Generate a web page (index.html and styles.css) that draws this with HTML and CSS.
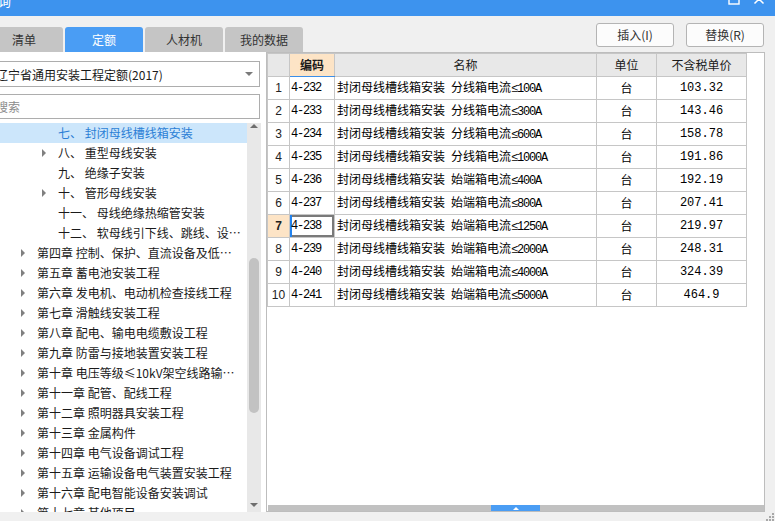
FILE: index.html
```html
<!DOCTYPE html>
<html lang="zh">
<head>
<meta charset="utf-8">
<title>查询</title>
<link rel="stylesheet" href="styles.css">
</head>
<body>
<div class="window">
  <div class="titlebar">
    <span class="title">查询</span>
    <div class="winctl">
      <svg class="ctl" width="12" height="12" viewBox="0 0 12 12"><rect x="1" y="1" width="10" height="10" fill="none" stroke="#fff" stroke-width="1.4"/></svg>
      <svg class="ctl" width="12" height="12" viewBox="0 0 12 12"><path d="M1.5 1.5L10.5 10.5M10.5 1.5L1.5 10.5" stroke="#fff" stroke-width="1.5"/></svg>
    </div>
  </div>

  <div class="toolbar">
    <div class="tabs">
      <div class="tab">清单</div>
      <div class="tab active">定额</div>
      <div class="tab">人材机</div>
      <div class="tab">我的数据</div>
    </div>
    <div class="actions">
      <button class="btn">插入(I)</button>
      <button class="btn">替换(R)</button>
    </div>
  </div>

  <div class="main">
    <div class="left">
      <div class="select"><span>辽宁省通用安装工程定额(2017)</span><span class="caret"></span></div>
      <div class="search">搜索</div>
      <div class="tree">
        <ul class="tree-list">
          <li class="node l3 selected"><span class="arrow"></span><span class="label">七、 封闭母线槽线箱安装</span></li>
          <li class="node l3"><span class="arrow has"></span><span class="label">八、 重型母线安装</span></li>
          <li class="node l3"><span class="arrow"></span><span class="label">九、 绝缘子安装</span></li>
          <li class="node l3"><span class="arrow has"></span><span class="label">十、 管形母线安装</span></li>
          <li class="node l3"><span class="arrow"></span><span class="label">十一、 母线绝缘热缩管安装</span></li>
          <li class="node l3"><span class="arrow"></span><span class="label">十二、 软母线引下线、跳线、设备连线</span></li>
          <li class="node l2"><span class="arrow has"></span><span class="label">第四章 控制、保护、直流设备及低压电器安装工程</span></li>
          <li class="node l2"><span class="arrow has"></span><span class="label">第五章 蓄电池安装工程</span></li>
          <li class="node l2"><span class="arrow has"></span><span class="label">第六章 发电机、电动机检查接线工程</span></li>
          <li class="node l2"><span class="arrow has"></span><span class="label">第七章 滑触线安装工程</span></li>
          <li class="node l2"><span class="arrow has"></span><span class="label">第八章 配电、输电电缆敷设工程</span></li>
          <li class="node l2"><span class="arrow has"></span><span class="label">第九章 防雷与接地装置安装工程</span></li>
          <li class="node l2"><span class="arrow has"></span><span class="label">第十章 电压等级≤10kV架空线路输电工程</span></li>
          <li class="node l2"><span class="arrow has"></span><span class="label">第十一章 配管、配线工程</span></li>
          <li class="node l2"><span class="arrow has"></span><span class="label">第十二章 照明器具安装工程</span></li>
          <li class="node l2"><span class="arrow has"></span><span class="label">第十三章 金属构件</span></li>
          <li class="node l2"><span class="arrow has"></span><span class="label">第十四章 电气设备调试工程</span></li>
          <li class="node l2"><span class="arrow has"></span><span class="label">第十五章 运输设备电气装置安装工程</span></li>
          <li class="node l2"><span class="arrow has"></span><span class="label">第十六章 配电智能设备安装调试</span></li>
          <li class="node l2"><span class="arrow has"></span><span class="label">第十七章 其他项目</span></li>
        </ul>
        <div class="vscroll">
          <div class="sb-btn sb-up"></div>
          <div class="sb-track"><div class="sb-thumb"></div></div>
          <div class="sb-btn sb-down"></div>
        </div>
      </div>
    </div>

    <div class="grid">
      <table class="table">
        <colgroup>
          <col class="c-no"><col class="c-code"><col class="c-name"><col class="c-unit"><col class="c-price">
        </colgroup>
        <thead>
          <tr>
            <th class="corner"></th>
            <th class="sorted">编码</th>
            <th>名称</th>
            <th>单位</th>
            <th>不含税单价</th>
          </tr>
        </thead>
        <tbody>
          <tr><td class="no">1</td><td class="code lat">4-232</td><td class="name">封闭母线槽线箱安装<span class="lat"> </span>分线箱电流<span class="lat">≤100A</span></td><td class="unit">台</td><td class="price">103.32</td></tr>
          <tr><td class="no">2</td><td class="code lat">4-233</td><td class="name">封闭母线槽线箱安装<span class="lat"> </span>分线箱电流<span class="lat">≤300A</span></td><td class="unit">台</td><td class="price">143.46</td></tr>
          <tr><td class="no">3</td><td class="code lat">4-234</td><td class="name">封闭母线槽线箱安装<span class="lat"> </span>分线箱电流<span class="lat">≤600A</span></td><td class="unit">台</td><td class="price">158.78</td></tr>
          <tr><td class="no">4</td><td class="code lat">4-235</td><td class="name">封闭母线槽线箱安装<span class="lat"> </span>分线箱电流<span class="lat">≤1000A</span></td><td class="unit">台</td><td class="price">191.86</td></tr>
          <tr><td class="no">5</td><td class="code lat">4-236</td><td class="name">封闭母线槽线箱安装<span class="lat"> </span>始端箱电流<span class="lat">≤400A</span></td><td class="unit">台</td><td class="price">192.19</td></tr>
          <tr><td class="no">6</td><td class="code lat">4-237</td><td class="name">封闭母线槽线箱安装<span class="lat"> </span>始端箱电流<span class="lat">≤800A</span></td><td class="unit">台</td><td class="price">207.41</td></tr>
          <tr class="current"><td class="no">7</td><td class="code lat focus">4-238</td><td class="name">封闭母线槽线箱安装<span class="lat"> </span>始端箱电流<span class="lat">≤1250A</span></td><td class="unit">台</td><td class="price">219.97</td></tr>
          <tr><td class="no">8</td><td class="code lat">4-239</td><td class="name">封闭母线槽线箱安装<span class="lat"> </span>始端箱电流<span class="lat">≤2000A</span></td><td class="unit">台</td><td class="price">248.31</td></tr>
          <tr><td class="no">9</td><td class="code lat">4-240</td><td class="name">封闭母线槽线箱安装<span class="lat"> </span>始端箱电流<span class="lat">≤4000A</span></td><td class="unit">台</td><td class="price">324.39</td></tr>
          <tr><td class="no">10</td><td class="code lat">4-241</td><td class="name">封闭母线槽线箱安装<span class="lat"> </span>始端箱电流<span class="lat">≤5000A</span></td><td class="unit">台</td><td class="price">464.9</td></tr>
        </tbody>
      </table>
      <div class="spacer"></div>
      <div class="hscroll"><div class="hthumb"></div></div>
    </div>
  </div>

  <div class="statusbar">
    <svg class="grip" width="11" height="9" viewBox="0 0 11 9">
      <rect x="8" y="1" width="2" height="2" fill="#a8a8a8"/>
      <rect x="5" y="4" width="2" height="2" fill="#a8a8a8"/>
      <rect x="8" y="4" width="2" height="2" fill="#a8a8a8"/>
      <rect x="2" y="7" width="2" height="2" fill="#a8a8a8"/>
      <rect x="5" y="7" width="2" height="2" fill="#a8a8a8"/>
      <rect x="8" y="7" width="2" height="2" fill="#a8a8a8"/>
    </svg>
  </div>
</div>
</body>
</html>
```

FILE: styles.css
```css
* { box-sizing: border-box; }
html, body { margin: 0; padding: 0; }
body {
  width: 775px;
  height: 521px;
  overflow: hidden;
  background: #f0f0f0;
  font-family: "Noto Sans CJK SC", "Noto Sans", sans-serif;
  font-size: 12px;
  color: #1a1a1a;
}

.window {
  width: 790px;
  margin-left: -15px;
  margin-top: -14px;
  display: flex;
  flex-direction: column;
}

/* title bar */
.titlebar {
  height: 30px;
  background: #3d93ee;
  color: #fff;
  display: flex;
}
.title { flex: 1; font-size: 13px; line-height: 30px; }
.winctl { display: flex; gap: 13px; margin: 7px 10px 0 0; }
.ctl { display: block; }

/* toolbar with tabs and buttons */
.toolbar {
  height: 36px;
  display: flex;
  justify-content: space-between;
}
.tabs { display: flex; gap: 2px; align-self: flex-end; }
.tab {
  width: 78px;
  height: 25px;
  line-height: 25px;
  text-align: center;
  background: #c5c5c5;
  color: #333;
  border-radius: 3px 3px 0 0;
}
.tab.active { background: #4a9df4; color: #fff; }
.actions { display: flex; gap: 12px; margin: 7px 11px 0 0; }
.btn {
  width: 78px;
  height: 24px;
  padding: 0;
  border: 1px solid #b4b4b4;
  border-radius: 3px;
  background: #fcfcfc;
  color: #333;
  font: inherit;
  line-height: 22px;
}

/* main area */
.main { height: 460px; display: flex; }

.left {
  width: 281px;
  flex: none;
  background: #fff;
  display: flex;
  flex-direction: column;
}
.select {
  height: 26px;
  margin: 9px 6px 0 4px;
  padding: 0 6px 0 6px;
  border: 1px solid #adadad;
  display: flex;
  align-items: center;
  justify-content: space-between;
  color: #1a1a1a;
}
.caret {
  width: 0;
  height: 0;
  border-left: 4px solid transparent;
  border-right: 4px solid transparent;
  border-top: 4px solid #7a7a7a;
}
.search {
  height: 25px;
  margin: 7px 6px 0 4px;
  padding: 0 6px;
  border: 1px solid #adadad;
  line-height: 23px;
  color: #8c8c8c;
}

.tree {
  flex: 1;
  min-height: 0;
  margin: 4px 5px 0 0;
  display: flex;
  overflow: hidden;
}
.tree-list {
  flex: 1;
  min-width: 0;
  list-style: none;
  margin: 0;
  padding: 0;
}
.node {
  height: 20px;
  line-height: 20px;
  display: flex;
  align-items: center;
  padding-right: 4px;
  white-space: nowrap;
  color: #1a1a1a;
}
.node.l2 { padding-left: 36px; }
.node.l3 { padding-left: 57px; }
.node.selected { background: #cce6fb; color: #2b7fd6; }
.arrow { width: 16px; flex: none; display: flex; align-items: center; }
.arrow.has::before {
  content: "";
  width: 0;
  height: 0;
  border-left: 4px solid #808080;
  border-top: 4px solid transparent;
  border-bottom: 4px solid transparent;
}
.label { min-width: 0; overflow: hidden; text-overflow: ellipsis; }

.vscroll {
  width: 14px;
  flex: none;
  background: #e8e8e8;
  display: flex;
  flex-direction: column;
}
.sb-btn { height: 12px; flex: none; display: flex; justify-content: center; align-items: flex-start; }
.sb-up { padding-top: 1px; }
.sb-up::before {
  content: "";
  width: 0;
  height: 0;
  border-left: 4px solid transparent;
  border-right: 4px solid transparent;
  border-bottom: 4px solid #6e6e6e;
}
.sb-down { padding-top: 3px; }
.sb-down::before {
  content: "";
  width: 0;
  height: 0;
  border-left: 4px solid transparent;
  border-right: 4px solid transparent;
  border-top: 4px solid #6e6e6e;
}
.sb-track { flex: 1; }
.sb-thumb {
  margin: 123px 0 0 2px;
  width: 10px;
  height: 155px;
  border-radius: 5px;
  background: #c2c2c2;
}

/* grid */
.grid {
  flex: 1;
  margin-right: 10px;
  border: 1px solid #bdbdbd;
  background: #fff;
  display: flex;
  flex-direction: column;
}
.table {
  width: 480px;
  table-layout: fixed;
  border-collapse: collapse;
  color: #000;
}
.c-no { width: 22px; }
.c-code { width: 45px; }
.c-name { width: 262px; }
.c-unit { width: 60px; }
.c-price { width: 90px; }
.table tr { height: 23px; }
.table th, .table td {
  border: 1px solid #c6c6c6;
  padding: 0;
  line-height: 16px;
  white-space: nowrap;
  overflow: hidden;
  vertical-align: middle;
}
.table th {
  background: #e8e8e8;
  font-weight: normal;
  text-align: center;
  color: #1a1a1a;
}
.table th.sorted {
  background: #fde4c6;
  font-weight: bold;
  border-bottom: 1px solid #3b8ee8;
}
.lat {
  font-family: "Liberation Mono", "DejaVu Sans Mono", monospace;
  letter-spacing: -1.2px;
}
.table td.no {
  text-align: center;
  color: #222;
  font-family: "Liberation Sans", sans-serif;
}
.table tr.current td.no { background: #fde4c6; font-weight: bold; }
.table td.code { padding-left: 1px; }
.table td.focus { box-shadow: inset 2px 0 0 #2383ee, inset 0 0 0 2px #7a7a7a; }
.table td.name { padding-left: 2px; }
.table td.unit { text-align: center; }
.table td.price {
  text-align: center;
  font-family: "Liberation Mono", "DejaVu Sans Mono", monospace;
}
.spacer { flex: 1; }
.hscroll {
  height: 6px;
  margin-left: 1px;
  background: #c1c1c1;
  display: flex;
}
.hthumb {
  margin-left: 223px;
  width: 49px;
  height: 6px;
  background: #4a9df4;
  display: flex;
  justify-content: center;
  align-items: center;
}
.hthumb::before {
  content: "";
  width: 0;
  height: 0;
  border-left: 3px solid transparent;
  border-right: 3px solid transparent;
  border-bottom: 3px solid #fff;
}

/* status bar */
.statusbar {
  height: 9px;
  display: flex;
  justify-content: flex-end;
}
.grip { display: block; }
```
